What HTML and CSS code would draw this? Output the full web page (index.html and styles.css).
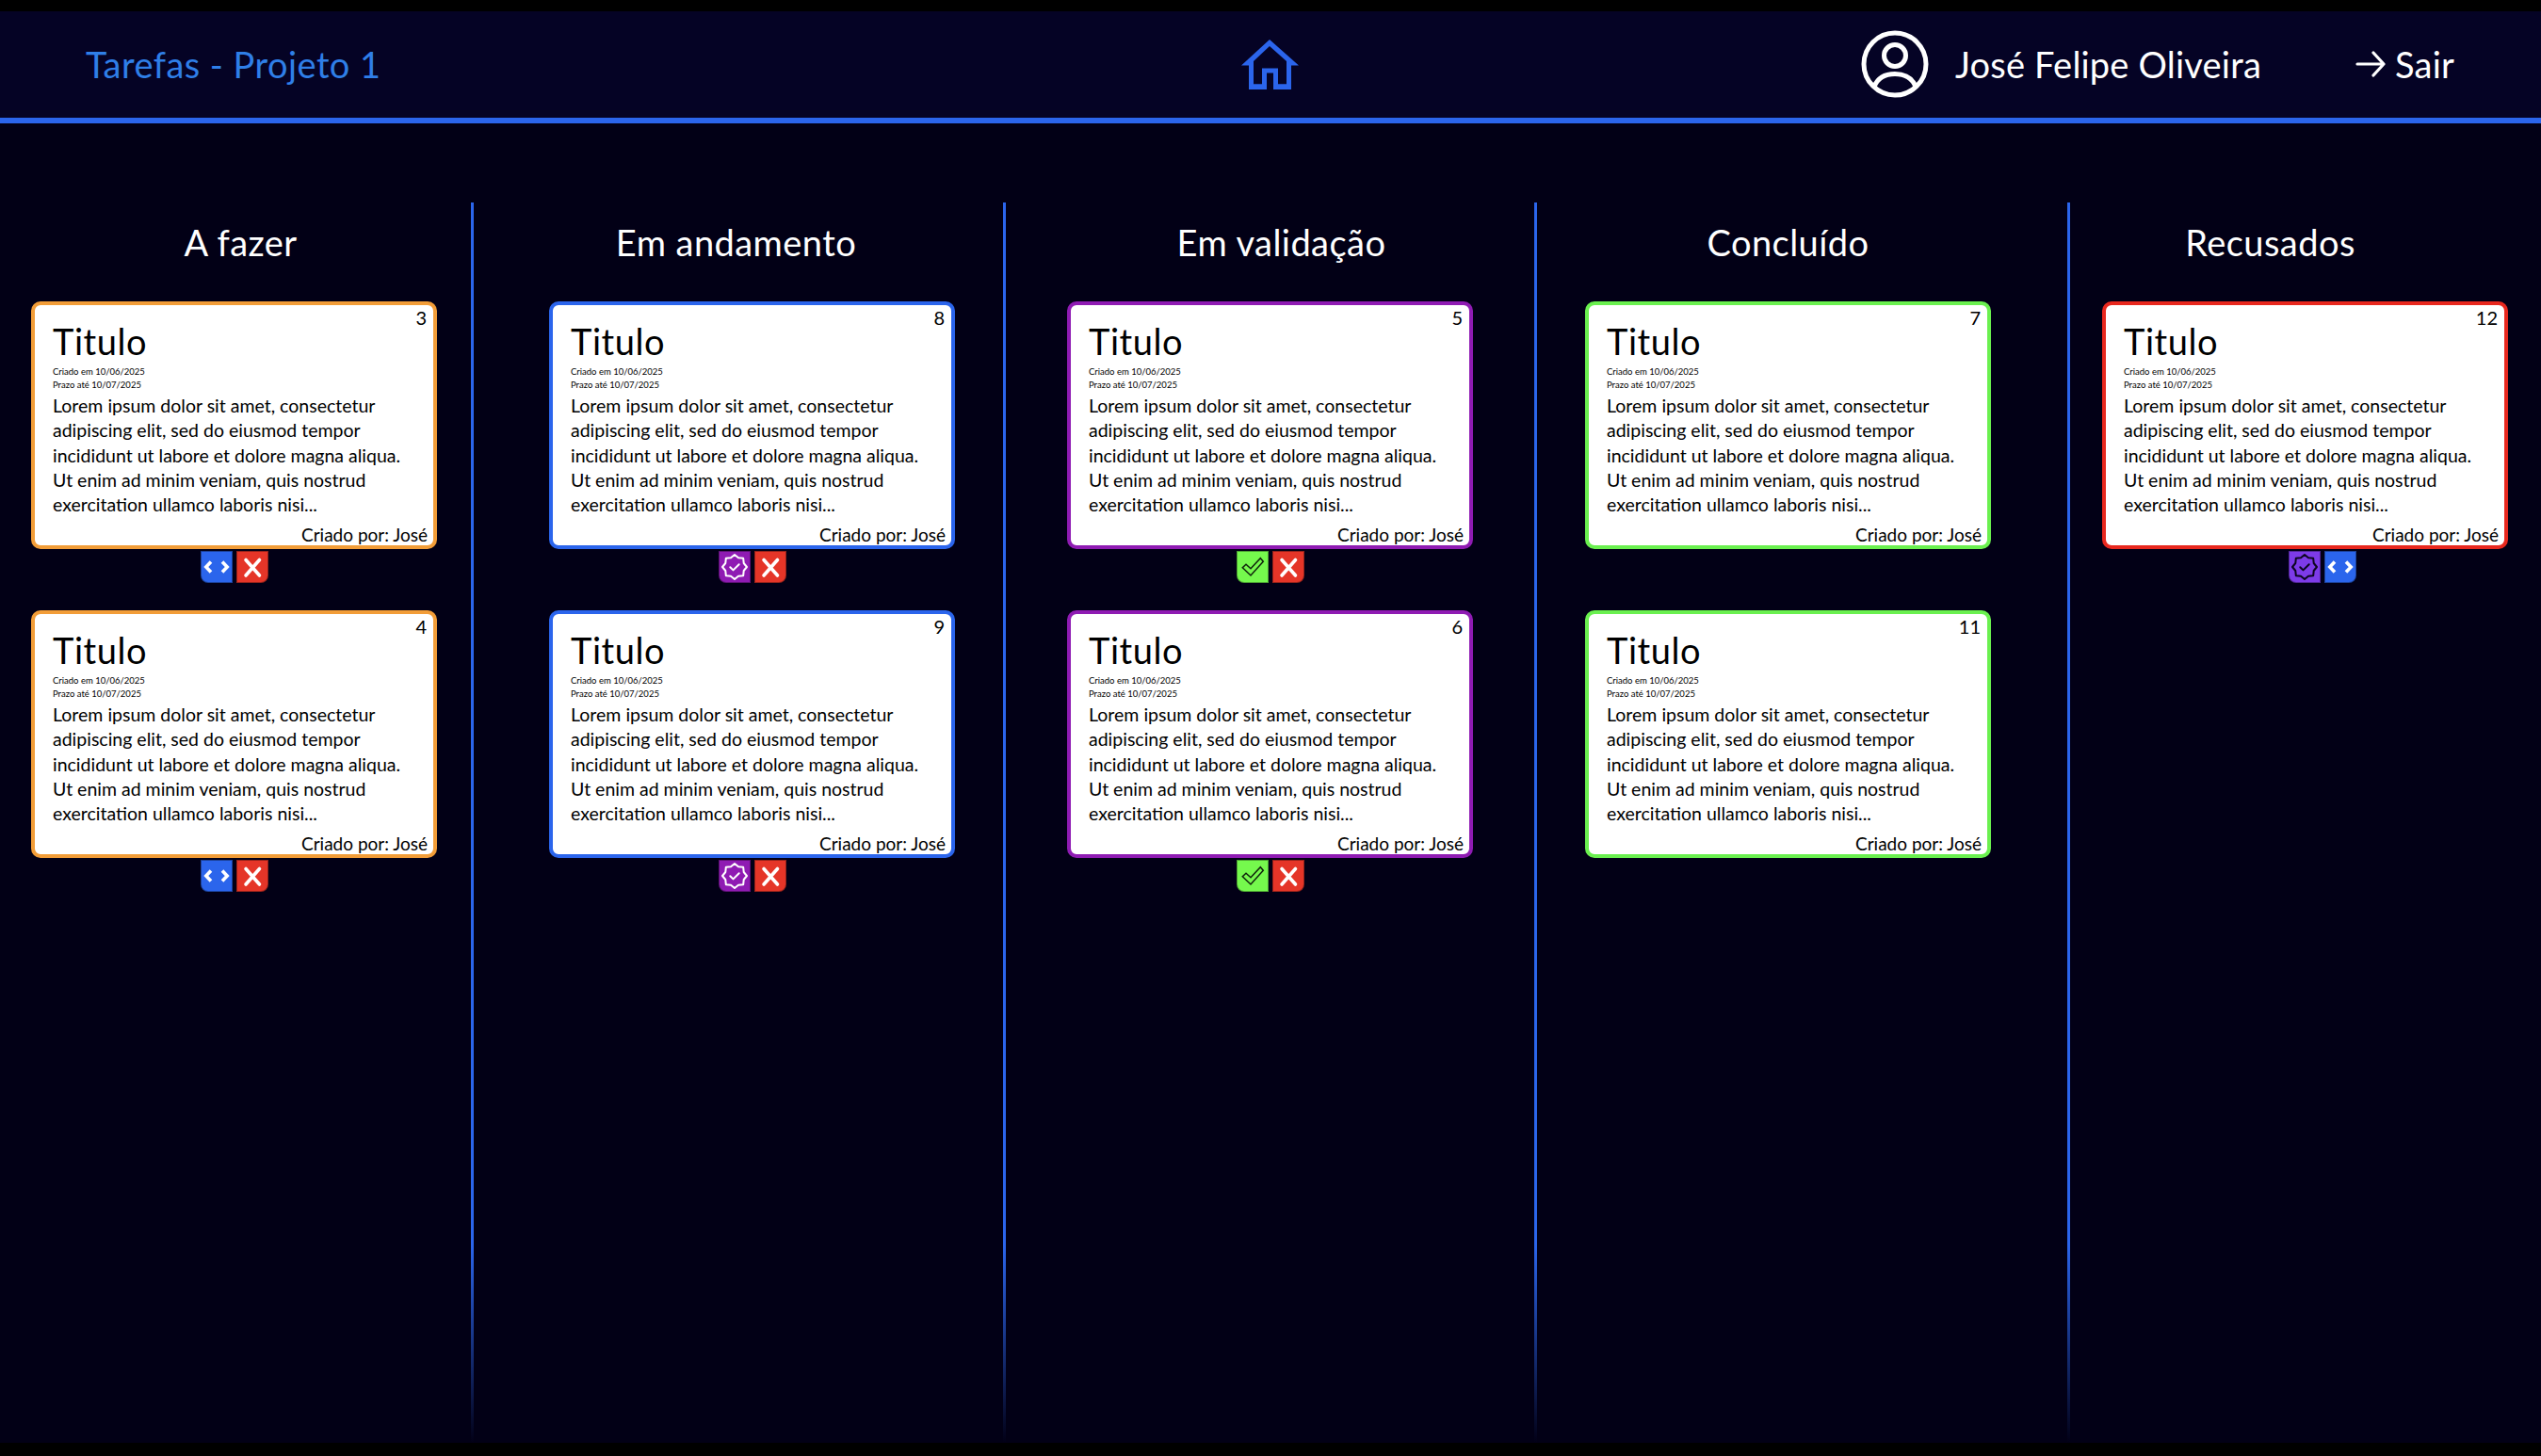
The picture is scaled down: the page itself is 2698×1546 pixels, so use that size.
FILE: index.html
```html
<!DOCTYPE html>
<html lang="pt-BR">
<head>
  <meta charset="UTF-8" />
  <title>Tarefas - Projeto 1</title>
  <link rel="stylesheet" href="styles.css">
</head>
<body>
  <svg class="sprite" width="0" height="0">
    <symbol id="i-code" viewBox="0 0 34 34"><path d="M11 11.5 5.8 17l5.2 5.5M23 11.500 28.200 17 23 22.500" fill="none" stroke="#fff" stroke-width="3.6"/></symbol>
    <symbol id="i-x" viewBox="0 0 34 34"><path d="M10 9.500 24.500 26M24.500 9.500 10 26" fill="none" stroke="#fff" stroke-width="3.6" stroke-linecap="round"/></symbol>
    <symbol id="i-badge" viewBox="0 0 34 34"><path d="M30 17 26.700 21 26.200 26.200 21 26.700 17 30 13 26.700 7.800 26.200 7.300 21 4 17 7.300 13 7.800 7.800 13 7.300 17 4 21 7.300 26.200 7.800 26.700 13Z M12.300 17.200 15.500 20.400 21.700 14.200" fill="none" stroke="currentColor" stroke-width="2" stroke-linecap="round" stroke-linejoin="round"/></symbol>
    <symbol id="i-check" viewBox="0 0 34 34"><path d="M6.300 17.700 15 26 28.300 11.300 25.300 7.700 15 18.700 10 14.300Z" fill="none" stroke="#10240c" stroke-width="1.500"/></symbol>
  </svg>

  <div class="page">
    <header class="topbar">
      <div class="page-title">Tarefas - Projeto 1</div>
      <a class="home-link" href="#">
        <svg width="62" height="54" viewBox="0 0 62 54"><path fill="#2b65ec" fill-rule="evenodd" d="M0 27.500 30 0 61 27.500H53V53H34V35.600H27V53H8V27.500Z M30 7 13 23V47.300H22V30.500H39V47.300H48V23Z"/></svg>
      </a>
      <div class="user-area">
        <svg class="user-icon" width="72" height="72" viewBox="0 0 72 72" fill="none" stroke="#fff" stroke-width="5">
          <circle cx="36" cy="36" r="33"/>
          <circle cx="36" cy="27" r="11.500"/>
          <path d="M14 60C18 50 26 46.500 36 46.500S54 50 58 60"/>
        </svg>
        <span class="user-name">José Felipe Oliveira</span>
        <a class="logout" href="#">
          <svg width="32" height="28" viewBox="0 0 32 28" fill="none" stroke="#fff" stroke-width="3.200" stroke-linecap="round" stroke-linejoin="round"><path d="M2 14H30M19 2 30 14 19 26"/></svg>
          <span>Sair</span>
        </a>
      </div>
    </header>

    <main class="board">
      <section class="column col-todo">
        <h2 class="column-title">A fazer</h2>
        <div class="task">
          <article class="card card-orange">
            <span class="card-num">3</span>
            <h3 class="card-title">Titulo</h3>
            <p class="card-dates">Criado em 10/06/2025<br>Prazo até 10/07/2025</p>
            <p class="card-text">Lorem ipsum dolor sit amet, consectetur<br>adipiscing elit, sed do eiusmod tempor<br>incididunt ut labore et dolore magna aliqua.<br>Ut enim ad minim veniam, quis nostrud<br>exercitation ullamco laboris nisi...</p>
            <p class="card-author">Criado por: José</p>
          </article>
          <div class="card-actions">
            <button class="btn btn-blue"><svg><use href="#i-code"/></svg></button>
            <button class="btn btn-red"><svg><use href="#i-x"/></svg></button>
          </div>
        </div>
        <div class="task">
          <article class="card card-orange">
            <span class="card-num">4</span>
            <h3 class="card-title">Titulo</h3>
            <p class="card-dates">Criado em 10/06/2025<br>Prazo até 10/07/2025</p>
            <p class="card-text">Lorem ipsum dolor sit amet, consectetur<br>adipiscing elit, sed do eiusmod tempor<br>incididunt ut labore et dolore magna aliqua.<br>Ut enim ad minim veniam, quis nostrud<br>exercitation ullamco laboris nisi...</p>
            <p class="card-author">Criado por: José</p>
          </article>
          <div class="card-actions">
            <button class="btn btn-blue"><svg><use href="#i-code"/></svg></button>
            <button class="btn btn-red"><svg><use href="#i-x"/></svg></button>
          </div>
        </div>
      </section>

      <section class="column col-doing">
        <h2 class="column-title">Em andamento</h2>
        <div class="task">
          <article class="card card-blue">
            <span class="card-num">8</span>
            <h3 class="card-title">Titulo</h3>
            <p class="card-dates">Criado em 10/06/2025<br>Prazo até 10/07/2025</p>
            <p class="card-text">Lorem ipsum dolor sit amet, consectetur<br>adipiscing elit, sed do eiusmod tempor<br>incididunt ut labore et dolore magna aliqua.<br>Ut enim ad minim veniam, quis nostrud<br>exercitation ullamco laboris nisi...</p>
            <p class="card-author">Criado por: José</p>
          </article>
          <div class="card-actions">
            <button class="btn btn-purple"><svg class="badge-light"><use href="#i-badge"/></svg></button>
            <button class="btn btn-red"><svg><use href="#i-x"/></svg></button>
          </div>
        </div>
        <div class="task">
          <article class="card card-blue">
            <span class="card-num">9</span>
            <h3 class="card-title">Titulo</h3>
            <p class="card-dates">Criado em 10/06/2025<br>Prazo até 10/07/2025</p>
            <p class="card-text">Lorem ipsum dolor sit amet, consectetur<br>adipiscing elit, sed do eiusmod tempor<br>incididunt ut labore et dolore magna aliqua.<br>Ut enim ad minim veniam, quis nostrud<br>exercitation ullamco laboris nisi...</p>
            <p class="card-author">Criado por: José</p>
          </article>
          <div class="card-actions">
            <button class="btn btn-purple"><svg class="badge-light"><use href="#i-badge"/></svg></button>
            <button class="btn btn-red"><svg><use href="#i-x"/></svg></button>
          </div>
        </div>
      </section>

      <section class="column col-review">
        <h2 class="column-title">Em validação</h2>
        <div class="task">
          <article class="card card-purple">
            <span class="card-num">5</span>
            <h3 class="card-title">Titulo</h3>
            <p class="card-dates">Criado em 10/06/2025<br>Prazo até 10/07/2025</p>
            <p class="card-text">Lorem ipsum dolor sit amet, consectetur<br>adipiscing elit, sed do eiusmod tempor<br>incididunt ut labore et dolore magna aliqua.<br>Ut enim ad minim veniam, quis nostrud<br>exercitation ullamco laboris nisi...</p>
            <p class="card-author">Criado por: José</p>
          </article>
          <div class="card-actions">
            <button class="btn btn-green"><svg><use href="#i-check"/></svg></button>
            <button class="btn btn-red"><svg><use href="#i-x"/></svg></button>
          </div>
        </div>
        <div class="task">
          <article class="card card-purple">
            <span class="card-num">6</span>
            <h3 class="card-title">Titulo</h3>
            <p class="card-dates">Criado em 10/06/2025<br>Prazo até 10/07/2025</p>
            <p class="card-text">Lorem ipsum dolor sit amet, consectetur<br>adipiscing elit, sed do eiusmod tempor<br>incididunt ut labore et dolore magna aliqua.<br>Ut enim ad minim veniam, quis nostrud<br>exercitation ullamco laboris nisi...</p>
            <p class="card-author">Criado por: José</p>
          </article>
          <div class="card-actions">
            <button class="btn btn-green"><svg><use href="#i-check"/></svg></button>
            <button class="btn btn-red"><svg><use href="#i-x"/></svg></button>
          </div>
        </div>
      </section>

      <section class="column col-done">
        <h2 class="column-title">Concluído</h2>
        <div class="task">
          <article class="card card-green">
            <span class="card-num">7</span>
            <h3 class="card-title">Titulo</h3>
            <p class="card-dates">Criado em 10/06/2025<br>Prazo até 10/07/2025</p>
            <p class="card-text">Lorem ipsum dolor sit amet, consectetur<br>adipiscing elit, sed do eiusmod tempor<br>incididunt ut labore et dolore magna aliqua.<br>Ut enim ad minim veniam, quis nostrud<br>exercitation ullamco laboris nisi...</p>
            <p class="card-author">Criado por: José</p>
          </article>
          <div class="card-actions"></div>
        </div>
        <div class="task">
          <article class="card card-green">
            <span class="card-num">11</span>
            <h3 class="card-title">Titulo</h3>
            <p class="card-dates">Criado em 10/06/2025<br>Prazo até 10/07/2025</p>
            <p class="card-text">Lorem ipsum dolor sit amet, consectetur<br>adipiscing elit, sed do eiusmod tempor<br>incididunt ut labore et dolore magna aliqua.<br>Ut enim ad minim veniam, quis nostrud<br>exercitation ullamco laboris nisi...</p>
            <p class="card-author">Criado por: José</p>
          </article>
          <div class="card-actions"></div>
        </div>
      </section>

      <section class="column col-refused">
        <h2 class="column-title">Recusados</h2>
        <div class="task">
          <article class="card card-red">
            <span class="card-num">12</span>
            <h3 class="card-title">Titulo</h3>
            <p class="card-dates">Criado em 10/06/2025<br>Prazo até 10/07/2025</p>
            <p class="card-text">Lorem ipsum dolor sit amet, consectetur<br>adipiscing elit, sed do eiusmod tempor<br>incididunt ut labore et dolore magna aliqua.<br>Ut enim ad minim veniam, quis nostrud<br>exercitation ullamco laboris nisi...</p>
            <p class="card-author">Criado por: José</p>
          </article>
          <div class="card-actions">
            <button class="btn btn-violet"><svg class="badge-dark"><use href="#i-badge"/></svg></button>
            <button class="btn btn-blue"><svg><use href="#i-code"/></svg></button>
          </div>
        </div>
      </section>
    </main>
  </div>
</body>
</html>
```

FILE: styles.css
```css
* {
  box-sizing: border-box;
}

html, body {
  margin: 0;
  height: 100%;
  overflow: hidden;
}

body {
  background: #000;
  font-family: 'Lato', 'Open Sans', sans-serif;
  padding: 12px 0 14px;
}

a {
  color: inherit;
  text-decoration: none;
}

.sprite {
  position: absolute;
}

.page {
  height: 100%;
  background: #020016;
  display: flex;
  flex-direction: column;
}

/* Top bar */
.topbar {
  height: 119px;
  flex-shrink: 0;
  border-bottom: 6px solid #2b65ec;
  background: #050325;
  display: grid;
  grid-template-columns: 1fr auto 1fr;
  align-items: center;
  padding: 0 92px 2px 91px;
}

.page-title {
  color: #2f7fe8;
  font-size: 38px;
  letter-spacing: 0.45px;
}

.home-link {
  display: flex;
  margin-top: 2px;
}

.user-area {
  display: flex;
  align-items: center;
  justify-content: flex-end;
  color: #fff;
  font-size: 38px;
  letter-spacing: 0.2px;
}

.user-name {
  margin-left: 28px;
  margin-right: 100px;
}

.logout {
  display: flex;
  align-items: center;
  gap: 10px;
}

/* Board */
.board {
  flex: 1;
  margin-top: 84px;
  display: grid;
  grid-template-columns: 503px 565px 564px 566px 1fr;
}

.column {
  background: linear-gradient(to bottom, #2b65ec 0%, #2b65ec 84%, rgba(43,101,236,0) 100%) right top / 3px 100% no-repeat;
}

.col-refused {
  background: none;
}

.column-title {
  margin: 16px 0 37px;
  color: #fff;
  font-size: 38px;
  font-weight: 400;
  letter-spacing: 0.45px;
  line-height: 52px;
  text-align: center;
  width: 431px;
}

.col-todo { padding-left: 33px; }
.col-doing { padding-left: 80px; }
.col-review { padding-left: 65px; }
.col-done { padding-left: 51px; }
.col-refused { padding-left: 34px; }

.col-todo .column-title { margin-left: 7px; }
.col-doing .column-title { margin-left: -17px; }
.col-review .column-title { margin-left: 12px; }
.col-done .column-title { margin-left: 0; }
.col-refused .column-title { margin-left: -37px; }

.task {
  width: 431px;
  margin-bottom: 28px;
}

/* Cards */
.card {
  position: relative;
  height: 263px;
  padding: 12px 14px 0 19px;
  background: #fff;
  border: 4px solid;
  border-radius: 10px;
  color: #000;
}

.card-orange { border-color: #f29d38; }
.card-blue { border-color: #2b65ec; }
.card-purple { border-color: #8f1bb3; }
.card-green { border-color: #6af04f; }
.card-red { border-color: #e8281e; }

.card-num {
  position: absolute;
  top: 0;
  right: 7px;
  font-size: 20px;
  line-height: 26px;
}

.card-title {
  margin: 0;
  font-size: 38px;
  font-weight: 400;
  letter-spacing: 0.55px;
  line-height: 52px;
}

.card-dates {
  margin: 0;
  font-size: 9.500px;
  line-height: 13.500px;
}

.card-text {
  margin: 3px 0 0;
  font-size: 19.500px;
  line-height: 26.250px;
}

.card-author {
  margin: 6px -8px 0 0;
  font-size: 19px;
  line-height: 26px;
  text-align: right;
}

/* Action buttons under a card */
.card-actions {
  height: 37px;
  padding-top: 2px;
  display: flex;
  justify-content: center;
  gap: 4px;
}

.col-refused .card-actions {
  padding-left: 36px;
}

.btn {
  width: 34px;
  height: 34px;
  padding: 0;
  border: 1px solid rgba(0,0,0,0.35);
  cursor: pointer;
  display: flex;
  align-items: center;
  justify-content: center;
}

.btn:first-child { border-radius: 0 0 0 8px; }
.btn:last-child { border-radius: 0 0 8px 0; }

.btn svg {
  width: 34px;
  height: 34px;
  flex-shrink: 0;
}

.btn-blue { background: #2b65ec; }
.btn-red { background: #e53528; }
.btn-purple { background: #8f1bb3; }
.btn-green { background: #75f94d; }
.btn-violet { background: #7d3be8; }

.badge-light { color: #fff; }
.badge-dark { color: #0c0520; }
```
